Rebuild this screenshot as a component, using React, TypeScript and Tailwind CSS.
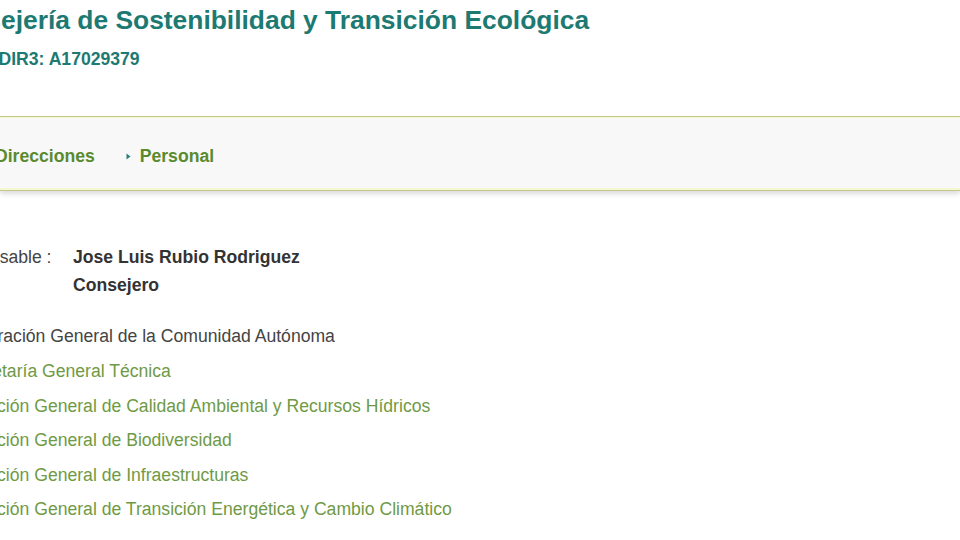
import React from "react";

const links = [
  "Secretaría General Técnica",
  "Dirección General de Calidad Ambiental y Recursos Hídricos",
  "Dirección General de Biodiversidad",
  "Dirección General de Infraestructuras",
  "Dirección General de Transición Energética y Cambio Climático",
];

function Tri() {
  return (
    <svg width="5" height="7" viewBox="0 0 5 7" className="inline-block">
      <path d="M0.5 0.5 L4.5 3.5 L0.5 6.5 Z" fill="#2a7f7a" />
    </svg>
  );
}

export default function App() {
  return (
    <div
      className="w-[960px] h-[540px] overflow-hidden bg-white"
      style={{ fontFamily: '"Liberation Sans", Arial, sans-serif' }}
    >
      {/* Title */}
      <div className="ml-[-65px] mt-[2px] h-[36px] leading-[36px] text-[26.4px] font-bold text-[#1c7a72] whitespace-nowrap">
        Consejería de Sostenibilidad y Transición Ecológica
      </div>
      <div className="ml-[-67px] mt-[9px] h-[24px] leading-[24px] text-[17.6px] font-bold text-[#1c7a72] whitespace-nowrap">
        Código DIR3: A17029379
      </div>

      {/* Breadcrumb / tab bar */}
      <div className="mt-[45px] h-[75px] bg-[#f8f8f8] border-t border-b border-[#c3c98a] shadow-[inset_0_1px_0_#f4f7d2,inset_0_-2px_0_#f4f7d2,0_3px_5px_rgba(0,0,0,0.14)]">
        <div className="ml-[-5px] pt-[29px] flex items-center leading-[20px] text-[17.6px] font-bold text-[#5a8a2e] whitespace-nowrap">
          <span>Direcciones</span>
          <span className="ml-[31px] mr-[9px] flex items-center">
            <Tri />
          </span>
          <span>Personal</span>
        </div>
      </div>

      {/* Responsable */}
      <div className="mt-[52px] ml-[-61px] text-[17.6px] leading-[28px] text-[#444] whitespace-nowrap">
        <div className="flex">
          <span className="w-[134px]">Responsable :</span>
          <div className="flex flex-col font-bold text-[#333]">
            <span>Jose Luis Rubio Rodriguez</span>
            <span>Consejero</span>
          </div>
        </div>
      </div>

      {/* Org list */}
      <div className="mt-[20px] ml-[-70px] text-[17.6px] leading-[34.4px] whitespace-nowrap">
        <div className="text-[#444]">Administración General de la Comunidad Autónoma</div>
        <ul className="pl-[26px] pt-[1px]">
          {links.map((l) => (
            <li key={l} className="text-[#6f9a45]">
              {l}
            </li>
          ))}
        </ul>
      </div>
    </div>
  );
}
